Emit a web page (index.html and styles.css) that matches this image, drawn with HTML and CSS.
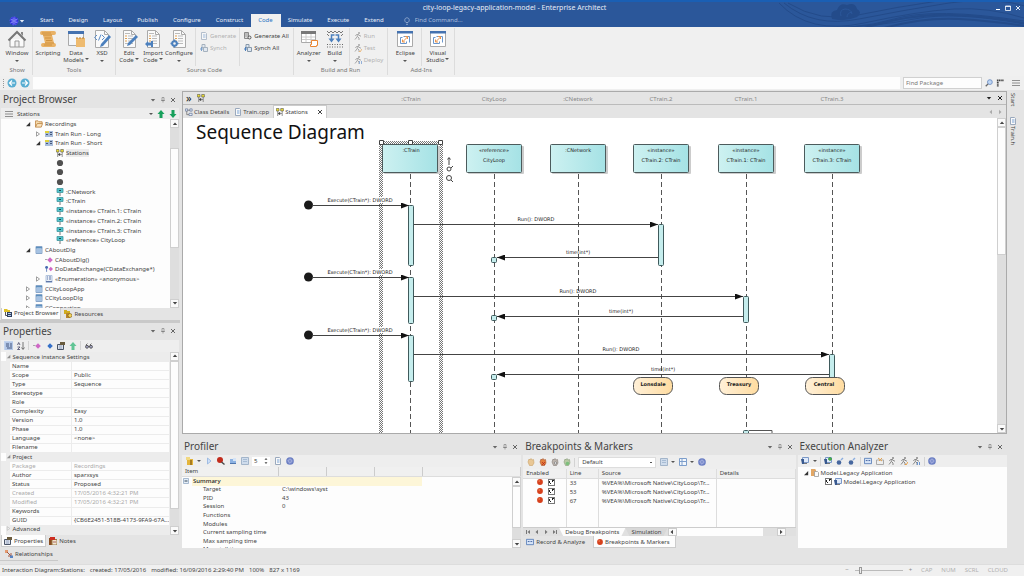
FILE: index.html
```html
<!DOCTYPE html>
<html lang="en">
<head>
    <meta charset="UTF-8">
    <meta name="viewport" content="width=device-width, initial-scale=1.0">
    <title>city-loop-legacy-application-model - Enterprise Architect</title>
    <link rel="stylesheet" href="styles.css">
</head>
<body>
    <!-- icon symbols -->
    <svg class="sprite" aria-hidden="true">
        <symbol id="i-house" viewBox="0 0 20 18"><path d="M3 9v8h14V9M8 17v-6h4v6" fill="#fafafa" stroke="#999"/><path d="M1.500 10.500L10 2l8.500 8.500" fill="none" stroke="#777" stroke-width="2"/><path d="M14 2h2v4l-2-2z" fill="#888"/></symbol>
        <symbol id="i-scroll" viewBox="0 0 20 18"><path d="M4 1h12q2 0 2 2t-2 2h-2l2 8q2 0 2 2t-2 2H5q-2 0-2-2t2-2h2L5 5H4Q2 5 2 3t2-2z" fill="#e9b266"/><path d="M5 5h9M7 13h9M7 8h6M8 10.500h6M4 3h9M6 15h8" stroke="#c98b35" fill="none" stroke-width=".8"/></symbol>
        <symbol id="i-data" viewBox="0 0 20 18"><path d="M2.500 1.500h15v14h-15z" fill="#f4f7fb" stroke="#aaa"/><path d="M2 1h16v3H2z" fill="#4472b0"/><path d="M10 8h9v9h-9z" fill="#eebb70"/><path d="M10 8h9" stroke="#b77c2d" stroke-dasharray="2 1"/></symbol>
        <symbol id="i-xsd" viewBox="0 0 20 18"><path d="M3.500 .5h9l4 4v13h-13z" fill="#fafafa" stroke="#aaa"/><path d="M12.500 .5v4h4" fill="none" stroke="#aaa"/><path d="M5 5L2.500 7.500 5 10M6.500 10.500l2.500-6M10 5l2.500 2.500L10 10" fill="none" stroke="#5a8cc8"/><path d="M8 17l1-3 8-9 2 2-8 9z" fill="#4c80bd"/></symbol>
        <symbol id="i-page" viewBox="0 0 20 18"><path d="M4.500 .5h8l4 4v13h-12z" fill="#fafafa" stroke="#aaa"/><path d="M12.500 .5v4h4" fill="none" stroke="#aaa"/><path d="M6 6h2M6 8.500h2M6 11h2" stroke="#e0a050"/><path d="M9 6h5M9 8.500h5M9 11h5M6 13.500h8M6 3.500h5" stroke="#bbb"/></symbol>
        <symbol id="i-edit" viewBox="0 0 20 18"><use href="#i-page"/><path d="M8 16l1-3 8-8 2 2-8 8z" fill="#4c80bd"/></symbol>
        <symbol id="i-import" viewBox="0 0 20 18"><use href="#i-page"/><path d="M8 11v1.500H5V11l-3 3 3 3v-1.500h3V17h2v-6z" fill="#4c80bd"/></symbol>
        <symbol id="i-conf" viewBox="0 0 20 18"><use href="#i-page"/><circle cx="5.500" cy="13.500" r="2.300" fill="#f4f4f4" stroke="#4c80bd" stroke-width="2"/><path d="M5.500 9.500v2M5.500 15.500v2M1.500 13.500h2M7.500 13.500h2" stroke="#4c80bd" stroke-width="1.500"/></symbol>
        <symbol id="i-analyzer" viewBox="0 0 20 18"><path d="M2.500 1.500h14v11h-14z" fill="#fff" stroke="#aaa"/><path d="M2 1h15v3H2z" fill="#777"/><path d="M3 7h13M3 9.500h13M7 4v8M12 4v8" stroke="#ccc"/><path d="M12.500 10.500h6v5h-1v1h-6v-2h1z" fill="#fff" stroke="#e98532"/></symbol>
        <symbol id="i-build" viewBox="0 0 20 18"><path d="M2 1l2 2 2-2 2 2 2-2 2 2 2-2 2 2 2-2M2 4l2 2M16 6l2-2" fill="none" stroke="#777"/><path d="M9.500 5H6.500v4M10.500 5h3v4" stroke="#4c80bd" stroke-width="1.500" fill="none"/><path d="M3.500 8.500h6l-3 4zM10.500 8.500h6l-3 4z" fill="#4c80bd"/><path d="M2 14.500h17M2 17h17" stroke="#666" stroke-dasharray="1 1.500"/></symbol>
        <symbol id="i-ide" viewBox="0 0 20 18"><path d="M2.500 1.500h15v15h-15z" fill="#fff" stroke="#aaa"/><path d="M2 1h16v2.500H2z" fill="#4472b0"/><path d="M7.500 7.500h-2v6h6v-2M8.500 6.500h6v6" fill="none" stroke="#6b97cc"/><path d="M7.500 12l5-5M10 6.500h2.500V9M7.500 9.500V12H10" fill="none" stroke="#e9944c"/></symbol>
        <symbol id="i-doc" viewBox="0 0 8 8"><path d="M1.500 .5h4l1 1v6h-5z" fill="#fafafa" stroke="#9aa9bd"/><path d="M3 3h2.500M3 5h2.500" stroke="#7ba3d4"/></symbol>
        <symbol id="i-docs" viewBox="0 0 8 8"><path d="M.5 .5h4v6h-4z" fill="#ddd" stroke="#888"/><path d="M1 2h3M1 4h3" stroke="#999"/><circle cx="5.500" cy="5.500" r="1.500" fill="#eee" stroke="#555"/></symbol>
        <symbol id="i-synch" viewBox="0 0 8 8"><path d="M2 .5h3v3H2zM3.500 3.500h4v4h-4z" fill="#dce6f2" stroke="#89a"/><path d="M0 5h3M1.500 3v4" stroke="#4c80bd"/></symbol>
        <symbol id="i-run" viewBox="0 0 8 8"><circle cx="5" cy="1" r="1" fill="#888"/><path d="M4.500 2.500L3 5M1.500 4l1-1.500h2L6 4h1M3 5L1 7.500M3.500 4.500L5 6v2" stroke="#888" fill="none"/></symbol>
        <symbol id="i-test" viewBox="0 0 8 8"><use href="#i-run"/><path d="M5 7l1 1 2-3" stroke="#e9a046" fill="none"/></symbol>
        <symbol id="i-deploy" viewBox="0 0 8 8"><use href="#i-run"/><path d="M5.500 5v3M7.500 5v3" stroke="#6c95cf"/></symbol>
        <symbol id="i-knot" viewBox="0 0 10 10"><circle cx="5" cy="5" r="4.800" fill="#6d80c4"/><path d="M3.500 3.500h3v3h-3zM5 2l3 3-3 3-3-3z" fill="none" stroke="#c3cbee" stroke-width=".6"/></symbol>
        <symbol id="i-logo" viewBox="0 0 10 10"><circle cx="5" cy="5" r="4" fill="#2222d8"/><path d="M5 1v8M1.500 3l7 4M1.500 7l7-4M3 3h4v4H3z" fill="none" stroke="#a5a9ff" stroke-width=".6"/><circle cx="5" cy="5" r="4" fill="none" stroke="#5a58f5" stroke-dasharray="2 1"/></symbol>
        <symbol id="i-bulb" viewBox="0 0 8 8"><path d="M3 5.500C1 4 1.500 .8 4 .8s3 3.200 1 4.700zM3 7.300h2" fill="none" stroke="#9eb4d6" stroke-width=".8"/></symbol>
        <symbol id="i-back" viewBox="0 0 10 10"><circle cx="5" cy="5" r="4.500" fill="#5aaed2"/><path d="M8 5H3M5 2.500L2.500 5 5 7.500" fill="none" stroke="#fff" stroke-width="1.200"/></symbol>
        <symbol id="i-fwd" viewBox="0 0 10 10"><circle cx="5" cy="5" r="4.500" fill="#5aaed2"/><path d="M2 5h5M5 2.500L7.500 5 5 7.500" fill="none" stroke="#fff" stroke-width="1.200"/></symbol>
        <symbol id="i-pin" viewBox="0 0 6 6"><path d="M2 .5h2v3H2zM1 3.500h4M3 3.500v2" fill="none" stroke="#777" stroke-width=".6"/></symbol>
        <symbol id="i-close" viewBox="0 0 6 6"><path d="M1 1l4 4M5 1L1 5" stroke="currentColor" fill="none"/></symbol>
        <symbol id="i-down" viewBox="0 0 6 6"><path d="M.8 2h4.400L3 4.500z" fill="currentColor"/></symbol>
        <symbol id="i-up" viewBox="0 0 6 6"><path d="M.8 4h4.400L3 1.500z" fill="currentColor"/></symbol>
        <symbol id="i-left" viewBox="0 0 6 6"><path d="M4 .8v4.400L1.500 3z" fill="currentColor"/></symbol>
        <symbol id="i-right" viewBox="0 0 6 6"><path d="M2 .8v4.400L4.500 3z" fill="currentColor"/></symbol>
        <symbol id="i-first" viewBox="0 0 6 6"><path d="M5 1v4L2.500 3zM1 1h1v4H1z" fill="currentColor"/></symbol>
        <symbol id="i-last" viewBox="0 0 6 6"><path d="M1 1v4l2.500-2zM4 1h1v4H4z" fill="currentColor"/></symbol>
        <symbol id="i-open" viewBox="0 0 6 6"><path d="M5.200 1v4.200H1z" fill="#333"/></symbol>
        <symbol id="i-shut" viewBox="0 0 6 6"><path d="M1.500 .8v4.400L4.500 3z" fill="#fff" stroke="#888" stroke-width=".8"/></symbol>
        <symbol id="i-lines" viewBox="0 0 8 6"><path d="M0 .5h8M0 3h8M0 5.500h8" stroke="#777" stroke-width=".8"/></symbol>
        <symbol id="i-gup" viewBox="0 0 8 8"><path d="M4 0l3.500 4h-2v4h-3V4h-2z" fill="#17a05c"/></symbol>
        <symbol id="i-gupl" viewBox="0 0 8 8"><path d="M4 0l3.500 4h-2v4h-3V4h-2z" fill="#62c596"/></symbol>
        <symbol id="i-gdown" viewBox="0 0 8 8"><path d="M4 8L.5 4h2V0h3v4h2z" fill="#17a05c"/></symbol>
        <symbol id="i-folder" viewBox="0 0 9 8"><path d="M.5 7.500v-7h3l1 1H8v2" fill="#f6dcae" stroke="#c08a4a"/><path d="M.5 7.500l2-4h6l-1.500 4z" fill="#f9e3bd" stroke="#c08a4a"/></symbol>
        <symbol id="i-pkg" viewBox="0 0 8 8"><path d="M0 0h4l1 1v6H0z" fill="#e2a765"/><path d="M3.500 2.500h3l1 1v4h-4z" fill="#fafafa" stroke="#999" stroke-width=".8"/></symbol>
        <symbol id="i-dgm" viewBox="0 0 8 8"><path d="M0 1h8v6H0z" fill="#a9bddb"/><path d="M0 1h4v2H0z" fill="#e1d33a"/><path d="M1 4h2v1H1zM5 2h2v1H5zM5 4h2v1H5z" fill="#46597c"/></symbol>
        <symbol id="i-seq" viewBox="0 0 8 8"><path d="M.3 .5h2.700v2.500H.3zM4.700 .5h2.700v2.500H4.700z" fill="#f0e02c" stroke="#555" stroke-width=".6"/><path d="M1.700 3v5M6.200 3v5" stroke="#666" fill="none" stroke-width=".7"/><path d="M2 5.500l2-1.200v2.400zM4 5.500h2" fill="#444" stroke="#444" stroke-width=".5"/></symbol>
        <symbol id="i-ball" viewBox="0 0 8 8"><circle cx="4" cy="4" r="3.100" fill="#505050"/></symbol>
        <symbol id="i-life" viewBox="0 0 8 8"><path d="M1 .5h6v4H1z" fill="#4fc4cc" stroke="#3f949c" stroke-width=".8"/><path d="M3 2.500h2" stroke="#24424c"/><path d="M4 5v3" stroke="#777"/></symbol>
        <symbol id="i-class" viewBox="0 0 8 8"><path d="M1 .5h6v7H1z" fill="#dfe9f5" stroke="#89a6c9"/><path d="M1 1h6v1.500H1z" fill="#5c8fbe"/><path d="M1.500 4h5M1.500 6h5" stroke="#6c9bd0"/></symbol>
        <symbol id="i-enum" viewBox="0 0 8 8"><path d="M1 .5h6v7H1z" fill="#eaf0f8" stroke="#b2c4dd"/><path d="M2 2h1M2 4h1M4 2h2M4 4h2M1 6.500h6" stroke="#6077a8"/></symbol>
        <symbol id="i-op" viewBox="0 0 8 8"><path d="M5 1.300L7.800 4 5 6.700 2.300 4z" fill="#cf68c6"/><path d="M0 3.500h2.500" stroke="#aaa"/></symbol>
        <symbol id="i-opkey" viewBox="0 0 10 8"><circle cx="2" cy="2" r="1.800" fill="#4568b0"/><path d="M2 3v4.500" stroke="#4568b0"/><path d="M7.200 1.300L10 4 7.200 6.700 4.500 4z" fill="#cf68c6"/></symbol>
        <symbol id="i-attr" viewBox="0 0 8 8"><path d="M5 1.300L7.800 4 5 6.700 2.300 4z" fill="#3570c8"/></symbol>
        <symbol id="i-pb" viewBox="0 0 8 8"><path d="M0 0h3.500v1H6v2H0z" fill="#e0c025"/><path d="M3 3h5v5H3z" fill="#2f4160"/><path d="M4 4.500h3M4 6.500h3" stroke="#b9cceb"/><path d="M1.500 3v3.500H3" fill="none" stroke="#555"/></symbol>
        <symbol id="i-res" viewBox="0 0 8 8"><path d="M0 0h3v1h3v3H0z" fill="#d0ac20"/><path d="M2 3h4v5H2z" fill="#b8862a"/><circle cx="6" cy="5.500" r="2" fill="#f3d45a" stroke="#775510" stroke-width=".6"/></symbol>
        <symbol id="i-props" viewBox="0 0 8 8"><path d="M.5 2.500h6v5h-6z" fill="#fff" stroke="#4a5568"/><path d="M3 0h5v3H3z" fill="#6a5c3f"/><path d="M1.500 4h4M1.500 6h4" stroke="#7286ad"/></symbol>
        <symbol id="i-notes" viewBox="0 0 8 8"><path d="M0 1h3v7H0z" fill="#8a4c20"/><path d="M3 2.500h5v5.500H3z" fill="#f3e8d0" stroke="#974"/><path d="M1 0h5v3H1z" fill="#cd2d20"/><path d="M4 5h3" stroke="#a66"/></symbol>
        <symbol id="i-rel" viewBox="0 0 8 8"><path d="M0 0h3v3H0z" fill="#e39a70"/><path d="M2 2l4 4M6 3v3H3" stroke="#a3543d" fill="none"/><path d="M5 5.500h3V8H5z" fill="#5683c4"/></symbol>
        <symbol id="i-cat" viewBox="0 0 8 8"><path d="M0 0h8v8H0z" fill="#b4c8e8"/><path d="M1 2h3M1 4h3M2 6h5M5 2h2M5 4h2" stroke="#45577f"/></symbol>
        <symbol id="i-sort" viewBox="0 0 8 8"><path d="M.5 3l1.200-2.500L3 3M.5 5H3L.5 7.500H3" fill="none" stroke="#446" stroke-width=".8"/><path d="M6 0v7M4.500 5.500L6 7.500l1.500-2" fill="none" stroke="#555" stroke-width=".8"/></symbol>
        <symbol id="i-glass" viewBox="0 0 10 8"><circle cx="2.500" cy="5" r="1.800" fill="#aac" stroke="#444"/><circle cx="7.500" cy="5" r="1.800" fill="#aac" stroke="#444"/><path d="M1 3l2-2M6 3l2-2M4 4.500h2" stroke="#444"/></symbol>
        <symbol id="i-new" viewBox="0 0 8 8"><path d="M1 2h6v6H1z" fill="#e4b53c"/><path d="M0 0h4v3H0z" fill="#f1d880"/><path d="M4 3h2v5H4z" fill="#a87c20"/></symbol>
        <symbol id="i-play" viewBox="0 0 8 8"><path d="M2.500 1v6L6 4z" fill="#cfe0f8" stroke="#8fb1de" stroke-width=".8"/></symbol>
        <symbol id="i-stop" viewBox="0 0 8 8"><circle cx="3" cy="3" r="3" fill="#c22b1c"/><path d="M4.500 5l3 2.500" stroke="#444" stroke-width="1.300"/></symbol>
        <symbol id="i-box" viewBox="0 0 8 8"><path d="M1 2h6v5H1z" fill="#8db2e2"/><path d="M4 1h3v3H4z" fill="#d5e4f6"/><path d="M1 6.500h6" stroke="#4f76ae"/></symbol>
        <symbol id="i-grid" viewBox="0 0 8 8"><path d="M.5 .5h7v7h-7z" fill="#f3f7fc" stroke="#7d9ecb"/><path d="M3 1v6M1 3.500h6" stroke="#7d9ecb"/></symbol>
        <symbol id="i-list" viewBox="0 0 8 8"><path d="M.5 .5h7v7h-7z" fill="#cfdcec" stroke="#a3b5ca"/><path d="M2 2.500h4M2 4.500h4" stroke="#8ca6c4" stroke-width=".6"/></symbol>
        <symbol id="i-handy" viewBox="0 0 8 8"><path d="M1 4L2 1l1 1 1-1.500L5 2l1.500-.5L7 5 5.500 7.500h-3z" fill="#e9c795" stroke="#c9a166" stroke-width=".6"/></symbol>
        <symbol id="i-handr" viewBox="0 0 8 8"><path d="M1 4L2 1l1 1 1-1.500L5 2l1.500-.5L7 5 5.500 7.500h-3z" fill="#e27f3c" stroke="#a9562a" stroke-width=".6"/><path d="M3 4l3 3M6 4L3 7" stroke="#b5221a" stroke-width=".7"/></symbol>
        <symbol id="i-handn" viewBox="0 0 8 8"><path d="M1 4L2 1l1 1 1-1.500L5 2l1.500-.5L7 5 5.500 7.500h-3z" fill="#bdb5ae" stroke="#837a75" stroke-width=".6"/><circle cx="4.500" cy="5" r="1.200" fill="#eee" stroke="#777" stroke-width=".7"/></symbol>
        <symbol id="i-handg" viewBox="0 0 8 8"><path d="M1 4L2 1l1 1 1-1.500L5 2l1.500-.5L7 5 5.500 7.500h-3z" fill="#b7c9a4" stroke="#889a77" stroke-width=".6"/><circle cx="4.500" cy="5.500" r="1.800" fill="#7cbf7c"/></symbol>
        <symbol id="i-bp" viewBox="0 0 6 6"><circle cx="3" cy="3" r="2.900" fill="#d6401c"/><circle cx="2.200" cy="2" r=".8" fill="#ef8458"/></symbol>
        <symbol id="i-rec" viewBox="0 0 9 8"><path d="M.5 1h8v6h-8z" fill="#d7e4f7" stroke="#5a7fb9"/><path d="M2 3.500h2M5 3.500h2" stroke="#3a5c9c"/></symbol>
        <symbol id="i-win" viewBox="0 0 8 8"><path d="M1.500 .5h6v5h-6z" fill="#dfeafa" stroke="#7b98c7"/><path d="M0 2h3v5H1z" fill="#38598f"/><path d="M3 6.500h3" stroke="#777"/></symbol>
        <symbol id="i-wing" viewBox="0 0 8 8"><use href="#i-win"/><path d="M6 0v4M4 2h4" stroke="#3ba23b" stroke-width="1.300"/></symbol>
        <symbol id="i-tool" viewBox="0 0 8 8"><circle cx="3" cy="5.500" r="2.300" fill="#46679f"/><path d="M5 3l2-2" stroke="#8caee0" stroke-width="1.500"/></symbol>
        <symbol id="i-mail" viewBox="0 0 8 8"><path d="M.5 3h7v4.500h-7z" fill="#eee" stroke="#aaa"/><path d="M2 1l4 3M6 1L3 4" stroke="#e3a350"/></symbol>
        <symbol id="i-minus" viewBox="0 0 6 6"><path d="M.5 .5h5v5h-5z" fill="#e5eef8" stroke="#94abc5" stroke-width=".8"/><path d="M1.500 3h3" stroke="#345"/></symbol>
        <symbol id="i-find" viewBox="0 0 9 9"><circle cx="5.500" cy="3.500" r="2.700" fill="#bfd6f3" stroke="#6f8fc4"/><path d="M3.500 5.500L.8 8.200" stroke="#666" stroke-width="1.500"/></symbol>
        <symbol id="i-tree" viewBox="0 0 9 9"><path d="M1 1.500h8M2 3v6" stroke="#444" stroke-width="2" stroke-dasharray="1.500 .5"/></symbol>
        <symbol id="i-net" viewBox="0 0 9 8"><path d="M.5 .5H3v2.500H.5zM5.500 .5H8v2.500H5.500zM4.500 5.500H8V8H4.500z" fill="#e8eef8" stroke="#66789c" stroke-width=".8"/><path d="M2 3v4h2.500M3 2h2.500" stroke="#666" fill="none" stroke-width=".8"/></symbol>
    </svg>

    <header class="titlebar">
        <svg class="waves" viewBox="0 0 260 27" preserveAspectRatio="xMaxYMid slice" aria-hidden="true">
            <g fill="none" stroke="#234b8a">
                <path d="M20 2q30 25 75 16t90-16 80 4M24 2q32 20 70 12t80-14M15 2q30 32 85 20t90-14 70 9M30 27q60 3 100-9t130 2M60 27q50-1 90-9t110 5"/>
                <path d="M100 27q50-15 90-13t70 8M120 27q40-11 75-9t65 7" stroke-width="2"/>
            </g>
            <path d="M68 18q-3-8 5-9 3-8 10-5 8-3 10 4 6 3 0 8-12 5-25 2z" fill="#234b8a"/>
            <path d="M77 15q-2-6 4-7 6 0 7 5M83 16q0-4 5-5" fill="none" stroke="#2b579a"/>
        </svg>
        <div class="caption">
            <h1>city-loop-legacy-application-model - Enterprise Architect</h1>
            <div class="winbtns">
                <button aria-label="Minimize"><svg viewBox="0 0 6 6"><path d="M1 4.500h4" stroke="#fff"/></svg></button>
                <button aria-label="Maximize"><svg viewBox="0 0 6 6"><path d="M.5 1h5v4.500h-5zM.5 1.500h5" fill="none" stroke="#fff" stroke-width=".8"/></svg></button>
                <button aria-label="Close"><svg><use href="#i-close"/></svg></button>
            </div>
        </div>
        <nav class="menu">
            <button class="appbtn" aria-label="Application"><svg class="ic10"><use href="#i-logo"/></svg><svg class="ic6"><use href="#i-down"/></svg></button>
            <a href="#">Start</a><a href="#">Design</a><a href="#">Layout</a><a href="#">Publish</a><a href="#">Configure</a><a href="#">Construct</a><a href="#" class="active">Code</a><a href="#">Simulate</a><a href="#">Execute</a><a href="#">Extend</a>
            <label class="command"><svg class="ic8"><use href="#i-bulb"/></svg><input type="text" placeholder="Find Command..."></label>
        </nav>
    </header>

    <section class="ribbon">
        <div class="group">
            <div class="tools">
                <button class="big"><svg><use href="#i-house"/></svg>Window<i class="caret"></i></button>
            </div>
            <span class="name">Show</span>
        </div>
        <div class="group">
            <div class="tools">
                <button class="big"><svg><use href="#i-scroll"/></svg>Scripting</button>
                <button class="big"><svg><use href="#i-data"/></svg>Data<span>Models<i class="caret"></i></span></button>
                <button class="big slim"><svg><use href="#i-xsd"/></svg>XSD<i class="caret"></i></button>
            </div>
            <span class="name">Tools</span>
        </div>
        <div class="group">
            <div class="tools">
                <button class="big slim"><svg><use href="#i-edit"/></svg>Edit<span>Code<i class="caret"></i></span></button>
                <button class="big slim"><svg><use href="#i-import"/></svg>Import<span>Code<i class="caret"></i></span></button>
                <button class="big"><svg><use href="#i-conf"/></svg>Configure<i class="caret"></i></button>
                <div class="stack">
                    <button disabled><svg class="ic8"><use href="#i-doc"/></svg>Generate</button>
                    <button disabled><svg class="ic8"><use href="#i-synch"/></svg>Synch</button>
                </div>
                <div class="stack">
                    <button><svg class="ic8"><use href="#i-docs"/></svg>Generate All</button>
                    <button><svg class="ic8"><use href="#i-synch"/></svg>Synch All</button>
                </div>
            </div>
            <span class="name">Source Code</span>
        </div>
        <div class="group">
            <div class="tools">
                <button class="big"><svg><use href="#i-analyzer"/></svg>Analyzer<i class="caret"></i></button>
                <button class="big slim"><svg><use href="#i-build"/></svg>Build<i class="caret"></i></button>
                <div class="stack">
                    <button disabled><svg class="ic8"><use href="#i-run"/></svg>Run</button>
                    <button disabled><svg class="ic8"><use href="#i-test"/></svg>Test</button>
                    <button disabled><svg class="ic8"><use href="#i-deploy"/></svg>Deploy</button>
                </div>
            </div>
            <span class="name">Build and Run</span>
        </div>
        <div class="group">
            <div class="tools">
                <button class="big wide"><svg><use href="#i-ide"/></svg>Eclipse<i class="caret"></i></button>
                <button class="big wide ruled"><svg><use href="#i-ide"/></svg>Visual<span>Studio<i class="caret"></i></span></button>
            </div>
            <span class="name">Add-Ins</span>
        </div>
    </section>

    <div class="navbar">
        <i class="grip"></i>
        <button aria-label="Back"><svg class="ic10"><use href="#i-back"/></svg></button>
        <button aria-label="Forward"><svg class="ic10"><use href="#i-fwd"/></svg></button>
        <input class="path" type="text" aria-label="Location">
        <input class="find" type="text" placeholder="Find Package" aria-label="Find Package">
        <button aria-label="Find"><svg class="ic8"><use href="#i-find"/></svg></button>
        <button aria-label="Select in tree"><svg class="ic8"><use href="#i-tree"/></svg></button>
        <button class="last" aria-label="Menu"><svg class="ic8"><use href="#i-lines"/></svg></button>
    </div>

    <main class="work">
        <aside class="side">
            <section class="panel browser">
                <div class="head"><h2>Project Browser</h2><button aria-label="Options"><svg><use href="#i-down"/></svg></button><button aria-label="Pin"><svg><use href="#i-pin"/></svg></button><button aria-label="Close"><svg><use href="#i-close"/></svg></button></div>
                <div class="crumb"><svg class="ic8"><use href="#i-lines"/></svg><span>Stations</span><i class="caret"></i><button aria-label="Up"><svg class="ic8"><use href="#i-gup"/></svg></button><button aria-label="Down"><svg class="ic8"><use href="#i-gdown"/></svg></button></div>
                <div class="body">
                    <ul class="tree">
                        <li class="l1"><svg class="tw"><use href="#i-open"/></svg><svg class="ic8"><use href="#i-folder"/></svg>Recordings</li>
                        <li class="l2"><svg class="tw"><use href="#i-shut"/></svg><svg class="ic8"><use href="#i-dgm"/></svg>Train Run - Long</li>
                        <li class="l2"><svg class="tw"><use href="#i-open"/></svg><svg class="ic8"><use href="#i-dgm"/></svg>Train Run - Short</li>
                        <li class="l3"><svg class="ic8"><use href="#i-seq"/></svg><span class="sel">Stations</span></li>
                        <li class="l3"><svg class="ic8"><use href="#i-ball"/></svg></li>
                        <li class="l3"><svg class="ic8"><use href="#i-ball"/></svg></li>
                        <li class="l3"><svg class="ic8"><use href="#i-ball"/></svg></li>
                        <li class="l3"><svg class="ic8"><use href="#i-life"/></svg>:CNetwork</li>
                        <li class="l3"><svg class="ic8"><use href="#i-life"/></svg>:CTrain</li>
                        <li class="l3"><svg class="ic8"><use href="#i-life"/></svg>«instance» CTrain.1: CTrain</li>
                        <li class="l3"><svg class="ic8"><use href="#i-life"/></svg>«instance» CTrain.2: CTrain</li>
                        <li class="l3"><svg class="ic8"><use href="#i-life"/></svg>«instance» CTrain.3: CTrain</li>
                        <li class="l3"><svg class="ic8"><use href="#i-life"/></svg>«reference» CityLoop</li>
                        <li class="l1"><svg class="tw"><use href="#i-open"/></svg><svg class="ic8"><use href="#i-class"/></svg>CAboutDlg</li>
                        <li class="l2 leaf"><svg class="ic8"><use href="#i-op"/></svg>CAboutDlg()</li>
                        <li class="l2 leaf"><svg class="ic8"><use href="#i-opkey"/></svg>DoDataExchange(CDataExchange*)</li>
                        <li class="l2"><svg class="tw"><use href="#i-shut"/></svg><svg class="ic8"><use href="#i-enum"/></svg>«Enumeration» &lt;anonymous&gt;</li>
                        <li class="l1"><svg class="tw"><use href="#i-shut"/></svg><svg class="ic8"><use href="#i-class"/></svg>CCityLoopApp</li>
                        <li class="l1"><svg class="tw"><use href="#i-shut"/></svg><svg class="ic8"><use href="#i-class"/></svg>CCityLoopDlg</li>
                        <li class="l1"><svg class="tw"><use href="#i-shut"/></svg><svg class="ic8"><use href="#i-class"/></svg>CConnection</li>
                    </ul>
                    <div class="scroll mid"><button aria-label="Scroll up"><svg><use href="#i-up"/></svg></button><div class="track"><i></i></div><button aria-label="Scroll down"><svg><use href="#i-down"/></svg></button></div>
                </div>
                <div class="tabs"><button class="on"><svg class="ic8"><use href="#i-pb"/></svg>Project Browser</button><button><svg class="ic8"><use href="#i-res"/></svg>Resources</button></div>
            </section>

            <section class="panel properties">
                <div class="head"><h2>Properties</h2><button aria-label="Options"><svg><use href="#i-down"/></svg></button><button aria-label="Pin"><svg><use href="#i-pin"/></svg></button><button aria-label="Close"><svg><use href="#i-close"/></svg></button></div>
                <div class="toolbar">
                    <button class="down" aria-label="Categories"><svg><use href="#i-cat"/></svg></button>
                    <button aria-label="Sort"><svg><use href="#i-sort"/></svg></button><i class="sep"></i>
                    <button aria-label="Operations"><svg><use href="#i-op"/></svg></button>
                    <button aria-label="Attributes"><svg><use href="#i-attr"/></svg></button>
                    <button aria-label="Tags"><svg><use href="#i-props"/></svg></button>
                    <button aria-label="Up"><svg><use href="#i-gupl"/></svg></button><i class="sep"></i>
                    <button aria-label="Find"><svg><use href="#i-glass"/></svg></button>
                </div>
                <div class="body">
                    <div class="fit">
                        <table class="props">
                            <colgroup><col class="key-col"><col></colgroup>
                            <tr class="cat"><th colspan="2"><svg class="tw"><use href="#i-open"/></svg>Sequence instance Settings</th></tr>
                            <tr><th>Name</th><td></td></tr>
                            <tr><th>Scope</th><td>Public</td></tr>
                            <tr><th>Type</th><td>Sequence</td></tr>
                            <tr><th>Stereotype</th><td></td></tr>
                            <tr><th>Role</th><td></td></tr>
                            <tr><th>Complexity</th><td>Easy</td></tr>
                            <tr><th>Version</th><td>1.0</td></tr>
                            <tr><th>Phase</th><td>1.0</td></tr>
                            <tr><th>Language</th><td>&lt;none&gt;</td></tr>
                            <tr><th>Filename</th><td></td></tr>
                            <tr class="cat"><th colspan="2"><svg class="tw"><use href="#i-open"/></svg>Project</th></tr>
                            <tr class="ro"><th>Package</th><td>Recordings</td></tr>
                            <tr><th>Author</th><td>sparxsys</td></tr>
                            <tr><th>Status</th><td>Proposed</td></tr>
                            <tr class="ro"><th>Created</th><td>17/05/2016 4:32:21 PM</td></tr>
                            <tr class="ro"><th>Modified</th><td>17/05/2016 4:32:21 PM</td></tr>
                            <tr><th>Keywords</th><td></td></tr>
                            <tr><th>GUID</th><td>{CB6E2451-518B-4173-9FA9-67A...</td></tr>
                            <tr class="cat"><th colspan="2"><svg class="tw"><use href="#i-shut"/></svg>Advanced</th></tr>
                        </table>
                    </div>
                    <div class="scroll"><button aria-label="Scroll up"><svg><use href="#i-up"/></svg></button><div class="track"><i></i></div><button aria-label="Scroll down"><svg><use href="#i-down"/></svg></button></div>
                </div>
                <div class="tabs"><button class="on"><svg class="ic8"><use href="#i-props"/></svg>Properties</button><button><svg class="ic8"><use href="#i-notes"/></svg>Notes</button></div>
            </section>
            <button class="relations"><svg class="ic8"><use href="#i-rel"/></svg>Relationships</button>
        </aside>

        <div class="center">
            <section class="editor">
                <div class="lanes">
                    <span class="more">»</span><svg class="ic8"><use href="#i-seq"/></svg>
                    <svg class="names">
                        <text x="206" y="8">:CTrain</text><text x="289" y="8">CityLoop</text><text x="373" y="8">:CNetwork</text><text x="456" y="8">CTrain.2</text><text x="541" y="8">CTrain.1</text><text x="627" y="8">CTrain.3</text>
                    </svg>
                    <button aria-label="Windows"><svg><use href="#i-down"/></svg></button><button aria-label="Close"><svg><use href="#i-close"/></svg></button>
                </div>
                <div class="doctabs">
                    <button><svg class="ic8"><use href="#i-net"/></svg>Class Details</button>
                    <button><svg class="ic8"><use href="#i-doc"/></svg>Train.cpp</button>
                    <button class="on"><svg class="ic8"><use href="#i-seq"/></svg>Stations<svg class="x"><use href="#i-close"/></svg></button>
                    <span class="pager"><svg class="ic6"><use href="#i-left"/></svg><svg class="ic6"><use href="#i-right"/></svg></span>
                </div>
                <div class="body">
                    <svg class="diagram" role="img" aria-label="Sequence Diagram">
                        <defs>
                            <linearGradient id="aqua"><stop offset="0" stop-color="#cdf1f1"/><stop offset="1" stop-color="#a5e2e5"/></linearGradient>
                            <linearGradient id="sand"><stop offset="0" stop-color="#fff0d8"/><stop offset="1" stop-color="#ffdca0"/></linearGradient>
                            <pattern id="hatch" width="2" height="2" patternUnits="userSpaceOnUse"><path d="M0 0h1v1H0zM1 1h1v1H1z" fill="#777"/></pattern>
                            <marker id="arrow" markerWidth="9" markerHeight="6" refX="8" refY="3" orient="auto" markerUnits="userSpaceOnUse"><path d="M0 0l8 3-8 3z" fill="#111"/></marker>
                            <g id="box"><rect x="-26" y="28" width="56" height="28" rx="1" fill="#ccc"/><rect x="-27.500" y="26.500" width="55" height="28" rx="1" fill="url(#aqua)" stroke="#4c5b5c"/><path d="M.5 56v270" stroke="#555" stroke-dasharray="5 3"/></g>
                            <rect id="state" width="39" height="17" rx="7" fill="url(#sand)" stroke="#555"/>
                        </defs>
                        <text class="big-title" x="13" y="21">Sequence Diagram</text>
                        <g fill="url(#hatch)"><path d="M196 23h64v4h-64zM196 27h4v300h-4zM256 27h4v300h-4z"/></g>
                        <use href="#box" x="227" y="0"/><use href="#box" x="311" y="0"/><use href="#box" x="395" y="0"/><use href="#box" x="478" y="0"/><use href="#box" x="563" y="0"/><use href="#box" x="649" y="0"/>
                        <g class="lbl">
                            <text x="228" y="34">:CTrain</text>
                            <text x="311" y="34">«reference»</text><text x="311" y="44">CityLoop</text>
                            <text x="395" y="34">:CNetwork</text>
                            <text x="478" y="34">«instance»</text><text x="478" y="44">CTrain.2: CTrain</text>
                            <text x="563" y="34">«instance»</text><text x="563" y="44">CTrain.1: CTrain</text>
                            <text x="649" y="34">«instance»</text><text x="649" y="44">CTrain.3: CTrain</text>
                        </g>
                        <g fill="#fff" stroke="#444"><path d="M196.500 22.500h4v4h-4zM225.500 22.500h4v4h-4zM255.500 22.500h4v4h-4z"/></g>
                        <path d="M266 47v-7M264.500 41.500l1.500-2 1.500 2M264 51a2 2 0 1 0 4 0 2 2 0 1 0-4 0M268 50l2-2M263.500 60a2.500 2.500 0 1 0 5 0 2.500 2.500 0 1 0-5 0M268 62l2 2" fill="none" stroke="#444"/>
                        <g fill="#c5eded" stroke="#3f5a5c">
                            <rect x="225.500" y="87.500" width="5" height="60" rx="1"/><rect x="225.500" y="159.500" width="5" height="46" rx="1"/><rect x="225.500" y="217.500" width="5" height="46" rx="1"/>
                            <rect x="475.500" y="106.500" width="5" height="41" rx="1"/><rect x="560.500" y="178.500" width="5" height="26" rx="1"/><rect x="646.500" y="236.500" width="5" height="24" rx="1"/>
                            <rect x="308.500" y="139.500" width="5" height="5" rx="1"/><rect x="308.500" y="197.500" width="5" height="5" rx="1"/><rect x="308.500" y="256.500" width="5" height="5" rx="1"/>
                            <rect x="560.500" y="312.500" width="5" height="5" rx="1"/>
                        </g>
                        <path d="M566 312.500h23v4" fill="none" stroke="#555"/>
                        <g fill="#1a1a1a"><circle cx="125.500" cy="87" r="4.500"/><circle cx="125.500" cy="159" r="4.500"/><circle cx="125.500" cy="217" r="4.500"/></g>
                        <g fill="#fff"><rect x="143" y="79" width="68" height="6"/><rect x="143" y="151" width="68" height="6"/><rect x="143" y="209" width="68" height="6"/></g>
                        <g class="msg">
                            <path d="M129 87.500h97"/><path d="M129 159.500h97"/><path d="M129 217.500h97"/>
                            <path d="M231 106.500h244"/><path d="M231 178.500h329"/><path d="M231 236.500h415"/>
                            <path d="M475 139.500H314"/><path d="M560 198.500H314"/><path d="M646 256.500H314"/>
                        </g>
                        <g class="lbl">
                            <text x="177" y="84">Execute(CTrain*): DWORD</text><text x="177" y="156">Execute(CTrain*): DWORD</text><text x="177" y="214">Execute(CTrain*): DWORD</text>
                            <text x="353" y="103">Run(): DWORD</text><text x="395" y="175">Run(): DWORD</text><text x="438" y="233">Run(): DWORD</text>
                            <text x="395" y="136">time(int*)</text><text x="438" y="195">time(int*)</text><text x="480" y="253">time(int*)</text>
                        </g>
                        <use href="#state" x="450.500" y="259.500"/><use href="#state" x="536.500" y="259.500"/><use href="#state" x="622.500" y="259.500"/>
                        <g class="lbl strong"><text x="470" y="268">Lonsdale</text><text x="556" y="268">Treasury</text><text x="641" y="268">Central</text></g>
                    </svg>
                    <div class="scroll short"><button aria-label="Scroll up"><svg><use href="#i-up"/></svg></button><div class="track"><i></i></div><button aria-label="Scroll down"><svg><use href="#i-down"/></svg></button></div>
                </div>
            </section>

            <div class="docks">
                <section class="panel profiler">
                    <div class="head"><h2>Profiler</h2><button aria-label="Options"><svg><use href="#i-down"/></svg></button><button aria-label="Pin"><svg><use href="#i-pin"/></svg></button><button aria-label="Close"><svg><use href="#i-close"/></svg></button></div>
                    <div class="toolbar">
                        <button aria-label="New"><svg><use href="#i-new"/></svg></button><i class="caret"></i>
                        <button aria-label="Start"><svg><use href="#i-play"/></svg></button>
                        <button aria-label="Stop"><svg><use href="#i-stop"/></svg></button>
                        <button aria-label="Load"><svg><use href="#i-box"/></svg></button>
                        <button aria-label="Report"><svg><use href="#i-list"/></svg></button>
                        <span class="spin"><input type="text" value="5" aria-label="Interval"><span><svg><use href="#i-up"/></svg><svg><use href="#i-down"/></svg></span></span>
                        <button aria-label="Edit"><svg><use href="#i-doc"/></svg></button>
                        <button aria-label="Help"><svg><use href="#i-knot"/></svg></button>
                    </div>
                    <div class="colhead"><span>Item</span><span></span><span></span><span></span><span></span></div>
                    <div class="body">
                        <div class="fit">
                            <table class="prof">
                                <tr class="sum"><th><svg class="tw"><use href="#i-minus"/></svg><b>Summary</b></th><td></td><td></td></tr>
                                <tr><th>Target</th><td>C:\windows\syst</td><td></td></tr>
                                <tr><th>PID</th><td>43</td><td></td></tr>
                                <tr><th>Session</th><td>0</td><td></td></tr>
                                <tr><th>Functions</th><td></td><td></td></tr>
                                <tr><th>Modules</th><td></td><td></td></tr>
                                <tr><th>Current sampling time</th><td></td><td></td></tr>
                                <tr><th>Max sampling time</th><td></td><td></td></tr>
                                <tr><th>Max stall time</th><td></td><td></td></tr>
                            </table>
                        </div>
                        <div class="scroll"><button aria-label="Scroll up"><svg><use href="#i-up"/></svg></button><div class="track"><i></i></div><button aria-label="Scroll down"><svg><use href="#i-down"/></svg></button></div>
                    </div>
                </section>

                <section class="panel breaks">
                    <div class="head"><h2>Breakpoints &amp; Markers</h2><button aria-label="Options"><svg><use href="#i-down"/></svg></button><button aria-label="Pin"><svg><use href="#i-pin"/></svg></button><button aria-label="Close"><svg><use href="#i-close"/></svg></button></div>
                    <div class="toolbar">
                        <button aria-label="Enable all"><svg><use href="#i-handy"/></svg></button>
                        <button aria-label="Delete all"><svg><use href="#i-handr"/></svg></button>
                        <button aria-label="Disable all"><svg><use href="#i-handn"/></svg></button>
                        <button aria-label="Restore"><svg><use href="#i-handg"/></svg></button><i class="sep"></i>
                        <select aria-label="Set"><option>Default</option></select>
                        <button aria-label="Save"><svg><use href="#i-list"/></svg></button><i class="caret"></i>
                        <button aria-label="Columns"><svg><use href="#i-grid"/></svg></button><i class="caret"></i>
                        <button aria-label="Help"><svg><use href="#i-knot"/></svg></button>
                    </div>
                    <div class="body">
                        <table class="bps">
                            <thead><tr><th>Enabled</th><th>Line</th><th>Source</th><th>Details</th></tr></thead>
                            <tbody>
                                <tr><td><svg class="tw"><use href="#i-bp"/></svg><input type="checkbox" checked aria-label="Line 33"></td><td>33</td><td>%VEA%\Microsoft Native\CityLoop\Tr...</td><td></td></tr>
                                <tr><td><svg class="tw"><use href="#i-bp"/></svg><input type="checkbox" checked aria-label="Line 53"></td><td>53</td><td>%VEA%\Microsoft Native\CityLoop\Tr...</td><td></td></tr>
                                <tr><td><svg class="tw"><use href="#i-bp"/></svg><input type="checkbox" checked aria-label="Line 67"></td><td>67</td><td>%VEA%\Microsoft Native\CityLoop\Tr...</td><td></td></tr>
                                <tr class="rest"><td></td><td></td><td></td><td></td></tr>
                            </tbody>
                        </table>
                    </div>
                    <div class="sheets">
                        <button aria-label="First"><svg class="ic6"><use href="#i-first"/></svg></button><button aria-label="Previous"><svg class="ic6"><use href="#i-left"/></svg></button><button aria-label="Next"><svg class="ic6"><use href="#i-right"/></svg></button><button aria-label="Last"><svg class="ic6"><use href="#i-last"/></svg></button>
                        <button class="sheet on">Debug Breakpoints</button><button class="sheet">Simulation</button>
                        <div class="hscroll"><button aria-label="Scroll left"><svg class="ic6"><use href="#i-left"/></svg></button><i></i><button aria-label="Scroll right"><svg class="ic6"><use href="#i-right"/></svg></button></div>
                    </div>
                    <div class="tabs"><button><svg class="ic8"><use href="#i-rec"/></svg>Record &amp; Analyze</button><button class="on"><svg class="ic6"><use href="#i-bp"/></svg>Breakpoints &amp; Markers</button></div>
                </section>

                <section class="panel exec">
                    <div class="head"><h2>Execution Analyzer</h2><button aria-label="Options"><svg><use href="#i-down"/></svg></button><button aria-label="Pin"><svg><use href="#i-pin"/></svg></button><button aria-label="Close"><svg><use href="#i-close"/></svg></button></div>
                    <div class="toolbar">
                        <button aria-label="Scripts"><svg><use href="#i-win"/></svg></button><i class="caret"></i><i class="sep"></i>
                        <button aria-label="Add"><svg><use href="#i-wing"/></svg></button>
                        <button aria-label="Edit"><svg><use href="#i-tool"/></svg></button>
                        <button aria-label="Copy"><svg><use href="#i-tool"/></svg></button><i class="sep"></i>
                        <button aria-label="Build"><svg><use href="#i-rec"/></svg></button>
                        <button aria-label="Cancel"><svg><use href="#i-mail"/></svg></button>
                        <button aria-label="Run"><svg><use href="#i-run"/></svg></button>
                        <button aria-label="Test"><svg><use href="#i-test"/></svg></button>
                        <button aria-label="Deploy"><svg><use href="#i-deploy"/></svg></button><i class="sep"></i>
                        <button aria-label="Help"><svg><use href="#i-knot"/></svg></button>
                    </div>
                    <div class="body">
                        <ul class="scripts">
                            <li><svg class="tw"><use href="#i-open"/></svg><svg class="ic8"><use href="#i-pkg"/></svg>Model.Legacy Application</li>
                            <li class="child"><label><input type="checkbox" checked><svg class="ic8"><use href="#i-win"/></svg>Model.Legacy Application</label></li>
                        </ul>
                    </div>
                </section>
            </div>
        </div>

        <aside class="rail">
            <button>Start</button>
            <button><svg class="ic8"><use href="#i-doc"/></svg>Train.h</button>
        </aside>
    </main>

    <footer class="status">
        <span>Interaction Diagram:Stations:</span><span>created: 17/05/2016</span><span>modified: 16/09/2016 2:29:40 PM</span><span>100%</span><span>827 x 1169</span>
        <span class="zoom">−<input type="range" min="0" max="100" value="10" aria-label="Zoom">+</span>
        <span class="key">CAP</span><span class="key">NUM</span><span class="key">SCRL</span><span class="key">CLOUD</span>
    </footer>
</body>
</html>
```
FILE: styles.css
```css
* {
    box-sizing: border-box;
}

body {
    margin: 0;
    height: 100vh;
    display: flex;
    flex-direction: column;
    overflow: hidden;
    background: #e4e4e4;
    color: #444;
    font: 6px/8px "Noto Sans", sans-serif;
}

button, input, select {
    margin: 0;
    padding: 0;
    border: 0;
    background: none;
    color: inherit;
    font: inherit;
    outline: none;
}

button {
    display: flex;
    align-items: center;
    justify-content: center;
}

a {
    color: inherit;
    text-decoration: none;
}

ul {
    list-style: none;
    margin: 0;
    padding: 0;
}

table {
    border-collapse: collapse;
}

th, td {
    padding: 0;
    text-align: left;
    font-weight: normal;
}

svg {
    flex: none;
}

.sprite {
    position: absolute;
    width: 0;
    height: 0;
}

.ic6, .tw { width: 6px; height: 6px; }
.ic8 { width: 8px; height: 8px; }
.ic10 { width: 10px; height: 10px; }

.caret {
    display: inline-block;
    flex: none;
    border: 2px solid transparent;
    border-top-color: #555;
    border-bottom: 0;
}

/* title bar */
.titlebar {
    position: relative;
    height: 27px;
    background: #2b579a;
    border-top: 2px solid #1a5fb4;
    color: #e6edf8;
}

.waves {
    position: absolute;
    right: 0;
    top: 0;
    width: 260px;
    height: 25px;
}

.caption {
    position: relative;
    display: flex;
    height: 12px;
}

.caption h1 {
    flex: 1;
    margin: 0;
    padding-left: 34px;
    text-align: center;
    font-size: 7px;
    line-height: 12px;
    font-weight: normal;
}

.winbtns {
    display: flex;
    gap: 4px;
    padding-right: 3px;
}

.winbtns svg {
    width: 6px;
    height: 6px;
}

.menu {
    position: relative;
    display: flex;
    height: 13px;
    line-height: 13px;
}

.menu a {
    padding: 0 8px 0 7px;
}

.menu a.active {
    background: #f0f0f0;
    color: #2b74c4;
}

.appbtn {
    width: 33px;
    padding-left: 1px;
}

.command {
    display: flex;
    align-items: center;
    gap: 4px;
    padding-left: 11px;
}

.command input {
    width: 80px;
}

.command input::placeholder {
    color: #a9bddd;
}

/* ribbon */
.ribbon {
    display: flex;
    height: 49px;
    padding: 1px 0 1px 2px;
    background: #f0f0f0;
}

.group {
    display: flex;
    flex-direction: column;
    align-items: center;
    padding: 0 1px;
    border-right: 1px solid #dcdcdc;
}

.group .name {
    color: #777;
    line-height: 9px;
}

.tools {
    display: flex;
    flex: 1;
}

.big {
    flex-direction: column;
    justify-content: flex-start;
    min-width: 28px;
    line-height: 7px;
    padding-top: 2px;
}

.big.slim {
    min-width: 24px;
}

.big.wide {
    min-width: 32px;
}

.big.ruled {
    border-left: 1px solid #dcdcdc;
}

.big svg {
    width: 20px;
    height: 18px;
    margin-bottom: 2px;
}

.big .caret {
    margin-top: 3px;
}

.big span .caret {
    margin: 0 0 2px 1px;
}

.stack {
    display: flex;
    flex-direction: column;
    gap: 4px;
    padding: 4px 3px 0 4px;
}

.big + .stack {
    margin-left: 2px;
    border-left: 1px solid #dcdcdc;
}

.stack + .stack {
    border-left: 1px solid #dcdcdc;
}

.stack button {
    justify-content: flex-start;
    gap: 2px;
}

.stack button:disabled {
    color: #b2b2b2;
}

.stack button:disabled svg {
    opacity: 0.7;
}

/* address bar */
.navbar {
    display: flex;
    align-items: center;
    gap: 3px;
    height: 14px;
    padding: 1px 3px;
    background: #efefef;
}

.grip {
    height: 9px;
    border-left: 1px dotted #999;
}

.path, .find {
    height: 12px;
    background: #fdfdfd;
}

.path {
    flex: 1;
}

.find {
    width: 79px;
    border: 1px solid #d0d0d0;
    padding: 0 2px;
}

.find::placeholder {
    color: #777;
}

.navbar .last {
    margin-left: 4px;
    width: 10px;
}

/* work area */
.work {
    flex: 1;
    min-height: 0;
    display: flex;
    gap: 2px;
    padding-top: 1px;
}

.side {
    width: 180px;
    display: flex;
    flex-direction: column;
    padding-bottom: 3px;
}

.panel {
    display: flex;
    flex-direction: column;
    min-height: 0;
    min-width: 0;
}

.browser {
    flex: 230;
    padding: 0 1px;
    border-bottom: 3px solid #c9c9c9;
}

.properties {
    flex: 225;
    padding: 0 1px;
}

.head {
    display: flex;
    align-items: center;
    gap: 4px;
    height: 17px;
    padding: 0 3px 0 2px;
    color: #666;
}

.head h2 {
    flex: 1;
    margin: 0;
    color: #444;
    font-size: 10px;
    line-height: 17px;
    font-weight: normal;
}

.head svg {
    width: 6px;
    height: 6px;
}

.crumb {
    display: flex;
    align-items: center;
    gap: 4px;
    height: 11px;
    padding: 0 2px 0 4px;
    background: #ededed;
}

.crumb span {
    flex: 1;
}

.body {
    flex: 1;
    min-height: 0;
    display: flex;
    overflow: hidden;
    background: #fdfdfd;
}

.tree {
    flex: 1;
    height: calc(100% + 5px);
    display: grid;
    grid-auto-rows: 1fr;
}

.tree li {
    display: flex;
    align-items: center;
    gap: 2px;
    white-space: nowrap;
}

.tree .tw {
    margin-right: 2px;
}

.tree .l1 { padding-left: 24px; }
.tree .l2 { padding-left: 34px; }
.tree .l3 { padding-left: 55px; }
.tree .leaf { padding-left: 44px; }

.sel {
    background: #ececec;
}

.scroll {
    display: flex;
    flex-direction: column;
    width: 9px;
    background: #dedede;
}

.scroll button {
    height: 9px;
    border: 1px solid #cfcfcf;
    background: #fafafa;
}

.scroll svg {
    width: 6px;
    height: 6px;
}

.track {
    flex: 1;
}

.track i {
    display: block;
    height: 90%;
    border: 1px solid #cfcfcf;
    background: #fdfdfd;
}

.mid .track {
    padding-top: 20px;
}

.mid .track i {
    height: 66%;
}

.short .track i {
    height: 43%;
}

.profiler .track i {
    height: 80%;
}

.tabs {
    display: flex;
    height: 12px;
}

.tabs button {
    gap: 2px;
    padding: 0 3px;
}

.tabs .on {
    background: #fdfdfd;
    border: 1px solid #ccc;
    border-top: 0;
    padding: 0 2px;
}

.breaks .tabs button {
    padding: 0 5px 0 3px;
}

.breaks .tabs {
    gap: 3px;
}

.toolbar {
    display: flex;
    align-items: center;
    gap: 3px;
    height: 12px;
    padding: 0 3px;
    background: #eeeeee;
}

.toolbar button {
    width: 9px;
    height: 9px;
}

.toolbar button svg {
    width: 8px;
    height: 8px;
}

.toolbar .down {
    background: #c3d4ee;
}

.sep {
    height: 9px;
    border-left: 1px solid #d3d3d3;
}

.fit {
    flex: 1;
    min-width: 0;
    height: 100%;
    overflow: hidden;
}

.props {
    width: 100%;
    height: 100%;
    line-height: 7px;
    table-layout: fixed;
}

.key-col {
    width: 66px;
}

.props th, .props td {
    border: 1px solid #ececec;
    padding-left: 2px;
    white-space: nowrap;
    overflow: hidden;
}

.props th {
    border-left: 9px solid #ececec;
}

.props .cat th {
    background: #ececec;
    border-left: 0;
    padding-left: 0;
}

.props .cat .tw {
    width: 5px;
    height: 5px;
    margin-right: 2px;
    opacity: 0.5;
}

.props .ro {
    color: #aaa;
}

.relations {
    align-self: flex-start;
    gap: 2px;
    height: 14px;
    padding: 0 5px;
    border-bottom: 1px solid #c9c9c9;
}

.center {
    flex: 1;
    min-width: 0;
    display: flex;
    flex-direction: column;
    gap: 4px;
}

.editor {
    flex: 1;
    min-height: 0;
    display: flex;
    flex-direction: column;
    border: 1px solid #aaa;
}

.lanes {
    display: flex;
    align-items: center;
    height: 13px;
    padding: 0 3px;
    border-bottom: 1px solid #bbb;
    color: #222;
}

.lanes .more {
    width: 11px;
    font-size: 11px;
    line-height: 10px;
}

.lanes .names {
    flex: 1;
    height: 11px;
}

.names text {
    fill: #888;
    text-anchor: middle;
}

.lanes button {
    margin-left: 5px;
}

.lanes button svg {
    width: 6px;
    height: 6px;
}

.doctabs {
    display: flex;
    height: 13px;
}

.doctabs button {
    gap: 1px;
    padding: 0 3px 0 2px;
}

.doctabs .on {
    background: #fff;
    border: 1px solid #ccc;
    border-bottom: 0;
    margin-left: 1px;
}

.doctabs .x {
    width: 6px;
    height: 6px;
    margin-left: 8px;
}

.pager {
    display: flex;
    align-items: center;
    gap: 3px;
    margin-left: auto;
    padding-right: 3px;
    color: #aaa;
}

.editor .body {
    background: #fff;
}

.diagram {
    flex: 1;
    min-width: 0;
    height: 100%;
    overflow: hidden;
}

.big-title {
    font-size: 19px;
    fill: #111;
}

.lbl text {
    font: 5px "DejaVu Sans", sans-serif;
    fill: #222;
    text-anchor: middle;
}

.lbl.strong text {
    font-weight: bold;
}

.msg path {
    stroke: #444;
    marker-end: url(#arrow);
}

/* docked windows */
.docks {
    display: flex;
    gap: 2px;
    height: 110px;
    margin-bottom: 16px;
}

.profiler { flex: 340; }
.breaks { flex: 273; }
.exec { flex: 210; }

.colhead {
    display: flex;
    height: 10px;
    background: #f0f0f0;
    border-bottom: 1px solid #ddd;
}

.colhead span {
    width: 48px;
    padding-left: 3px;
    border-right: 1px solid #ccc;
}

.colhead span:first-child {
    width: 97px;
}

.colhead span:last-child {
    flex: 1;
}

.prof {
    width: 100%;
    height: calc(100% + 6px);
    line-height: 7px;
    table-layout: fixed;
}

.prof th {
    width: 97px;
    padding-left: 21px;
    white-space: nowrap;
}

.prof td {
    padding-left: 3px;
}

.prof td:last-child {
    width: 90px;
}

.prof .sum th {
    padding-left: 1px;
    background: linear-gradient(to right, transparent 10px, #fdf6d8 10px);
}

.prof .sum td:nth-child(2) {
    background: #fdf6d8;
}

.prof .sum b {
    margin-left: 4px;
    font-weight: 500;
    color: #222;
}

.prof .tw {
    vertical-align: middle;
}

.spin {
    display: flex;
    width: 18px;
    height: 9px;
    background: #fff;
}

.spin input {
    width: 11px;
    padding-left: 2px;
}

.spin span {
    display: flex;
    flex-direction: column;
    line-height: 4px;
}

.spin svg {
    width: 6px;
    height: 4px;
}

.breaks .toolbar {
    height: 14px;
}

.toolbar select {
    appearance: none;
    width: 78px;
    height: 11px;
    padding: 0 3px;
    border: 1px solid #ddd;
    background: linear-gradient(#555, #555) right 3px center / 2px 1px no-repeat #fff;
}

.bps {
    width: 100%;
    height: 100%;
    line-height: 8px;
    table-layout: fixed;
}

.bps th {
    background: #f0f0f0;
    border-bottom: 1px solid #ddd;
}

.bps th, .bps td {
    height: 9px;
    padding-left: 3px;
    border-right: 1px solid #ddd;
    white-space: nowrap;
}

.bps .rest td {
    height: auto;
}

.bps th:nth-child(1) { width: 43px; }
.bps th:nth-child(2) { width: 32px; }
.bps th:nth-child(3) { width: 118px; }

.bps td:first-child {
    padding-left: 14px;
}

.bps .tw {
    margin-right: 5px;
    vertical-align: top;
}

input[type=checkbox] {
    appearance: none;
    width: 7px;
    height: 7px;
    vertical-align: top;
    border: 1px solid #777;
    background: #fff;
}

input[type=checkbox]:checked {
    background: conic-gradient(from 20deg at 40% 80%, #222 20deg, transparent 20deg 280deg, #222 280deg 310deg, transparent 310deg) #fff;
}

.sheets {
    display: flex;
    height: 9px;
    background: #e0e0e0;
    border-top: 1px solid #ccc;
}

.sheets > button {
    width: 9px;
    color: #777;
}

.sheets .sheet {
    width: auto;
    padding: 0 6px;
    color: #444;
    background: #d8d8d8;
    clip-path: polygon(0 0, 100% 0, calc(100% - 4px) 100%, 4px 100%);
}

.sheets .sheet.on {
    background: #fdfdfd;
}

.hscroll {
    display: flex;
    flex: 1;
}

.hscroll button {
    width: 9px;
    background: #fafafa;
    border: 1px solid #ccc;
}

.hscroll i {
    flex: 1;
    margin-right: 14px;
    background: #fdfdfd;
}

.hscroll button:last-child {
    margin-right: 10px;
}

.exec .head {
    padding-right: 4px;
}

.scripts {
    padding: 1px 5px;
}

.scripts li, .scripts label {
    display: flex;
    align-items: center;
    gap: 2px;
    height: 9px;
}

.scripts .child {
    padding-left: 22px;
}

.rail {
    width: 15px;
    display: flex;
    flex-direction: column;
    align-items: flex-start;
    gap: 11px;
    padding-top: 2px;
}

.rail button {
    writing-mode: vertical-rl;
    gap: 1px;
}

/* status bar */
.status {
    display: flex;
    align-items: center;
    gap: 5px;
    height: 12px;
    padding: 0 16px 1px 2px;
    background: #f0f0f0;
    border-top: 1px solid #ddd;
}

.zoom {
    display: flex;
    align-items: center;
    gap: 6px;
    margin-left: auto;
    color: #888;
}

.zoom input {
    appearance: none;
    width: 48px;
    height: 8px;
    background: linear-gradient(#bbb, #bbb) center / 100% 1px no-repeat;
}

.zoom input::-webkit-slider-thumb {
    appearance: none;
    width: 3px;
    height: 7px;
    border: 1px solid #999;
    background: #eee;
}

.key {
    color: #b0b0b0;
    margin-left: 4px;
}
```
